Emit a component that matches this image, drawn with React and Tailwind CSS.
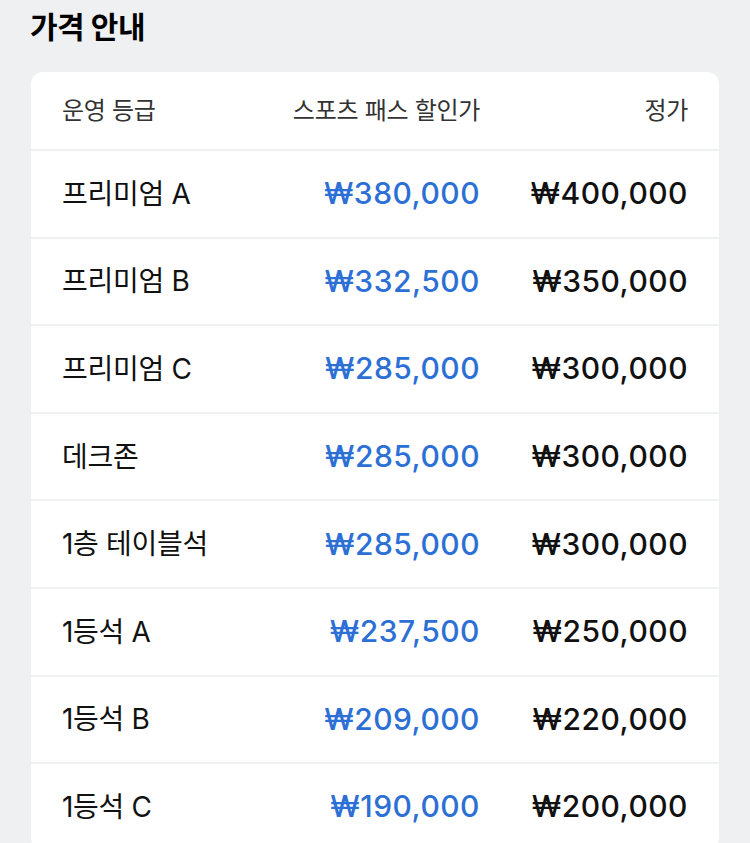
import React from 'react';

const rows = [
  { name: '프리미엄 A', sale: '₩380,000', price: '₩400,000' },
  { name: '프리미엄 B', sale: '₩332,500', price: '₩350,000' },
  { name: '프리미엄 C', sale: '₩285,000', price: '₩300,000' },
  { name: '데크존', sale: '₩285,000', price: '₩300,000' },
  { name: '1층 테이블석', sale: '₩285,000', price: '₩300,000' },
  { name: '1등석 A', sale: '₩237,500', price: '₩250,000' },
  { name: '1등석 B', sale: '₩209,000', price: '₩220,000' },
  { name: '1등석 C', sale: '₩190,000', price: '₩200,000' },
];

const App = () => {
  return (
    <div className="min-h-[843px] bg-[#eff0f2] px-[31px] font-['Inter','Noto_Sans_CJK_KR',sans-serif] overflow-hidden">
      <h2 className="h-[72px] pt-[7px] text-[30px] font-bold text-black leading-[40px] tracking-[-0.5px] -ml-[1px]">
        가격 안내
      </h2>

      <div className="bg-white rounded-[12px]">
        <div className="grid grid-cols-[1fr_200px_208px] items-center h-[77px] text-[24px] text-[#333] px-[31px] tracking-[-0.3px]">
          <span>운영 등급</span>
          <span className="text-right">스포츠 패스 할인가</span>
          <span className="text-right">정가</span>
        </div>

        {rows.map((r) => (
          <div
            key={r.name}
            className="grid grid-cols-[1fr_200px_208px] items-center h-[87.6px] border-t-2 border-[#f0f1f3] px-[31px]"
          >
            <span className="text-[28px] text-[#111] tracking-[-0.3px]">{r.name}</span>
            <span className="text-right text-[30px] font-medium text-[#2c6fd5] tracking-[0.5px]">{r.sale}</span>
            <span className="text-right text-[30px] font-medium text-[#111] tracking-[0.5px]">{r.price}</span>
          </div>
        ))}
      </div>
    </div>
  );
};

export default App;
